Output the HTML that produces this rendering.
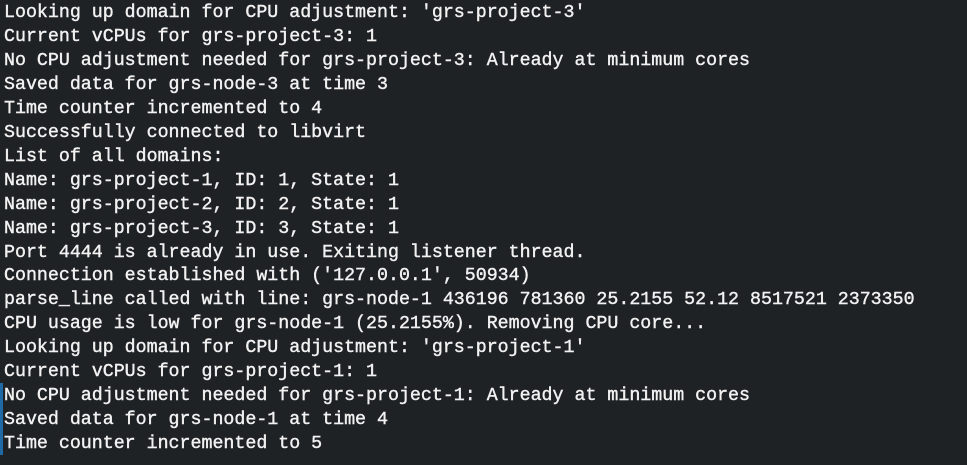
<!DOCTYPE html>
<html><head><style>
html,body{margin:0;padding:0;background:#1f2225;width:967px;height:465px;overflow:hidden}
pre{margin:0;position:absolute;left:4px;top:2px;font-family:"Liberation Mono",monospace;font-size:18.3px;line-height:23.95px;color:#f2f2f2;white-space:pre;-webkit-text-stroke:0.4px #f2f2f2}
.bar{position:absolute;left:0;top:383px;width:3px;height:72px;background:#1f6aa5}
</style></head><body>
<div class="bar"></div>
<pre>Looking up domain for CPU adjustment: 'grs-project-3'
Current vCPUs for grs-project-3: 1
No CPU adjustment needed for grs-project-3: Already at minimum cores
Saved data for grs-node-3 at time 3
Time counter incremented to 4
Successfully connected to libvirt
List of all domains:
Name: grs-project-1, ID: 1, State: 1
Name: grs-project-2, ID: 2, State: 1
Name: grs-project-3, ID: 3, State: 1
Port 4444 is already in use. Exiting listener thread.
Connection established with ('127.0.0.1', 50934)
parse_line called with line: grs-node-1 436196 781360 25.2155 52.12 8517521 2373350
CPU usage is low for grs-node-1 (25.2155%). Removing CPU core...
Looking up domain for CPU adjustment: 'grs-project-1'
Current vCPUs for grs-project-1: 1
No CPU adjustment needed for grs-project-1: Already at minimum cores
Saved data for grs-node-1 at time 4
Time counter incremented to 5</pre>
</body></html>
